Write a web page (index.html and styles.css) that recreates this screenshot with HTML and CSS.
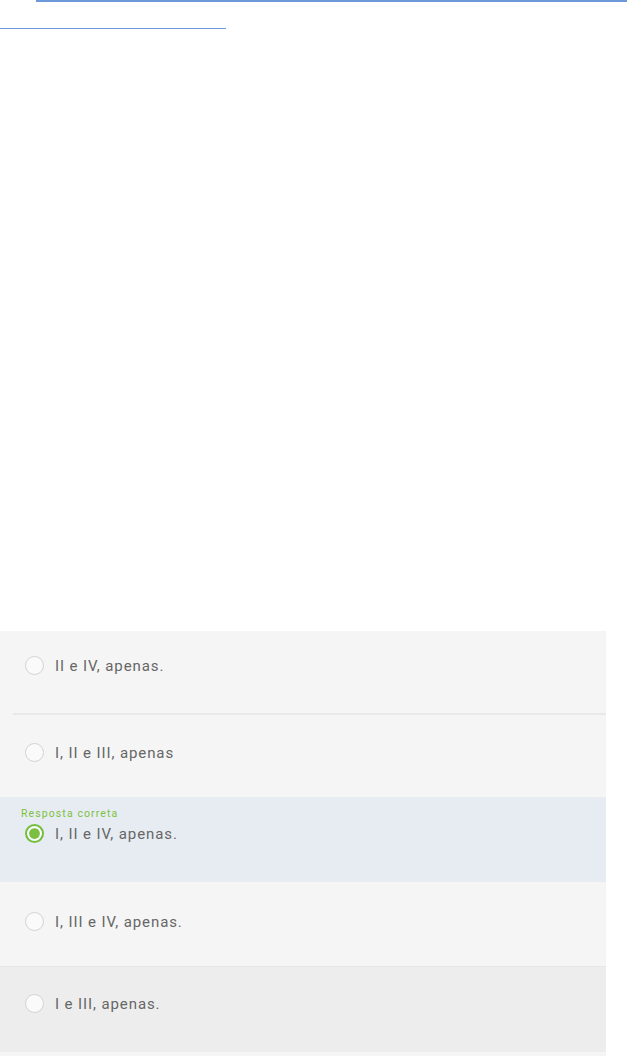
FILE: index.html
```html
<!DOCTYPE html>
<html lang="pt">
<head>
	<meta charset="utf-8">
	<title>Questão</title>
	<link rel="stylesheet" href="styles.css">
</head>
<body>
	<div class="rule-top"></div>
	<div class="rule-short"></div>

	<ul class="options">
		<li class="option first">
			<span class="radio"></span>
			<span class="label">II e IV, apenas.</span>
		</li>
		<li class="divider"></li>
		<li class="option">
			<span class="radio"></span>
			<span class="label">I, II e III, apenas</span>
		</li>
		<li class="option correct">
			<p class="hint">Resposta correta</p>
			<div class="line">
				<span class="radio checked"></span>
				<span class="label">I, II e IV, apenas.</span>
			</div>
		</li>
		<li class="option fourth">
			<span class="radio"></span>
			<span class="label">I, III e IV, apenas.</span>
		</li>
		<li class="option hover">
			<span class="radio"></span>
			<span class="label">I e III, apenas.</span>
		</li>
		<li class="tail"></li>
	</ul>
</body>
</html>
```

FILE: styles.css
```css
* {padding: 0; margin: 0; list-style: none; border: 0; box-sizing: border-box;}
body {
	background: #fff;
	font-family: Roboto, "Liberation Sans", sans-serif;
	color: #666;
}
.rule-top {
	margin-left: 36px;
	height: 2px;
	background: #6c9ad9;
}
.rule-short {
	width: 226px;
	height: 27px;
	border-bottom: 1px solid #6c9ad9;
}
.options {
	width: 606px;
	margin-top: 602px;
	background: #f5f5f5;
}
.option {
	height: 82px;
	padding: 28px 0 0 25px;
	display: flex;
	align-items: flex-start;
	gap: 11px;
	font-size: 15px;
	line-height: 20px;
	letter-spacing: 0.9px;
}
.option.first {
	padding-top: 25px;
}
.divider {
	height: 2px;
	margin-left: 13px;
	background: #e8e8e8;
}
.option.correct {
	display: block;
	height: 85px;
	padding: 11px 0 0 21px;
	background: #e7ecf2;
}
.option.fourth {
	height: 84px;
	padding-top: 30px;
}
.option.hover {
	height: 86px;
	padding-top: 27px;
	background: #ededed;
	border-top: 1px solid #e6e6e6;
}
.tail {
	height: 4px;
}
.hint {
	font-size: 10.5px;
	line-height: 12px;
	letter-spacing: 1.1px;
	color: #7cc043;
}
.line {
	display: flex;
	gap: 11px;
	margin: 4px 0 0 4px;
}
.radio {
	width: 19px;
	height: 19px;
	border-radius: 50%;
	border: 1px solid #d3d3d3;
	background: #fafafa;
	flex: none;
}
.radio.checked {
	border: 2px solid #72bf3b;
	padding: 2px;
	background: #7cc043;
	background-clip: content-box;
	box-shadow: inset 0 0 0 2px #fff;
}
.label {
	white-space: nowrap;
}
```
